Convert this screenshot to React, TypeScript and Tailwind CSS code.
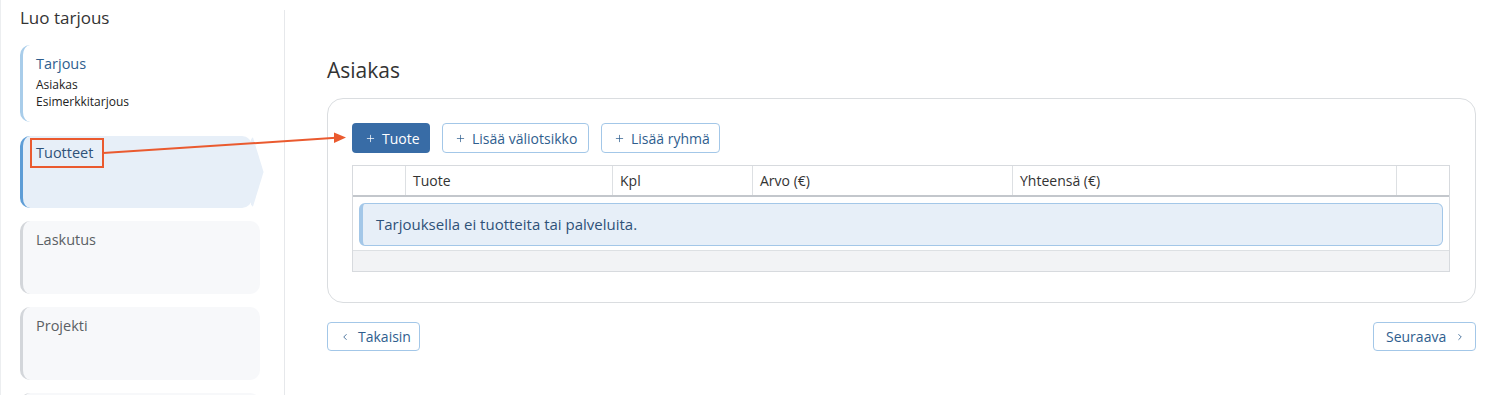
import { Plus, ChevronLeft, ChevronRight } from "lucide-react";

const columns = [
  { label: "", width: "w-[53px]" },
  { label: "Tuote", width: "w-[207px]" },
  { label: "Kpl", width: "w-[140px]" },
  { label: "Arvo (€)", width: "w-[260px]" },
  { label: "Yhteensä (€)", width: "w-[384px]" },
  { label: "", width: "flex-1" },
];

const StepCard = ({ title }: { title: string }) => (
  <div className="mt-[13px] h-[73px] w-[240px] shrink-0 rounded-[10px] border-l-[3px] border-[#d3d6da] bg-[#f7f8fa] pl-[13px] pt-[9px]">
    <div className="text-[14.5px] leading-[20px] text-[#5b5f64]">{title}</div>
  </div>
);

const OutlineButton = ({ children, className = "" }: { children: React.ReactNode; className?: string }) => (
  <button
    className={`flex h-[30px] shrink-0 items-center gap-[6px] whitespace-nowrap rounded-[4px] border border-[#a3c7e8] bg-white pl-[12px] text-[14px] text-[#2f5e8e] ${className}`}
  >
    {children}
  </button>
);

export default function App() {
  return (
    <div className="relative flex h-[395px] w-[1497px] overflow-hidden border-l border-[#eceef0] bg-white font-['Open_Sans',sans-serif]">
      {/* sidebar */}
      <aside className="mt-[10px] flex w-[284px] shrink-0 flex-col border-r border-[#e6e8eb] px-[19px]">
        <h1 className="-mt-[4px] shrink-0 text-[17px] leading-[24px] text-[#333]">Luo tarjous</h1>

        <div className="mt-[15px] h-[77px] w-[240px] shrink-0 rounded-[10px] border-l-[3px] border-[#a9cdea] bg-white pl-[13px] pt-[9px]">
          <div className="text-[14.5px] leading-[20px] text-[#2f5e8e]">Tarjous</div>
          <div className="mt-[2px] text-[12px] leading-[17px] text-[#222]">Asiakas</div>
          <div className="text-[12px] leading-[17px] text-[#222]">Esimerkkitarjous</div>
        </div>

        <div className="mt-[14px] flex h-[72px] shrink-0">
          <div className="h-[72px] w-[240px] rounded-[10px] border-l-[3px] border-[#5e9dd6] bg-[#e7eff8] pl-[13px] pt-[7px]">
            <div className="text-[14.5px] leading-[20px] text-[#2f5278]">Tuotteet</div>
          </div>
          <svg width="14" height="72" viewBox="0 0 14 72" className="-ml-[1px]">
            <polygon points="0,2 2,0 13,36 2,72 0,70" fill="#e7eff8" />
          </svg>
        </div>

        <StepCard title="Laskutus" />
        <StepCard title="Projekti" />
        <StepCard title="" />
      </aside>

      {/* main */}
      <main className="flex flex-1 flex-col pl-[42px] pr-[21px] pt-[56px]">
        <h2 className="text-[21px] leading-[28px] text-[#333]">Asiakas</h2>

        <section className="mt-[14px] rounded-[16px] border border-[#dadde0] px-[24px] pb-[30px] pt-[24px]">
          <div className="flex gap-[12px]">
            <button className="flex h-[30px] w-[78px] shrink-0 items-center gap-[6px] whitespace-nowrap rounded-[4px] bg-[#386ca6] pl-[13px] text-[14px] text-white">
              <Plus size={11} strokeWidth={1.6} />
              Tuote
            </button>
            <OutlineButton className="w-[147px]">
              <Plus size={11} strokeWidth={1.6} />
              Lisää väliotsikko
            </OutlineButton>
            <OutlineButton className="w-[119px]">
              <Plus size={11} strokeWidth={1.6} />
              Lisää ryhmä
            </OutlineButton>
          </div>

          <div className="mt-[12px] w-[1098px] border border-[#d7dade]">
            <div className="flex h-[31px] border-b-2 border-[#c3c7cc]">
              {columns.map((c, i) => (
                <div
                  key={i}
                  className={`${c.width} flex items-center pl-[7px] text-[14px] text-[#333] ${
                    i < columns.length - 1 ? "border-r border-[#dde0e3]" : ""
                  }`}
                >
                  {c.label}
                </div>
              ))}
            </div>
            <div className="px-[6px] pb-[4px] pt-[6px]">
              <div className="flex h-[43px] items-center rounded-[6px] border border-l-[4px] border-[#a3c7e8] bg-[#e7eff8] pl-[13px] text-[15px] text-[#2f5278]">
                Tarjouksella ei tuotteita tai palveluita.
              </div>
            </div>
            <div className="h-[21px] border-t border-[#dde0e3] bg-[#f2f3f5]" />
          </div>
        </section>

        <div className="mt-[19px] flex justify-between">
          <button className="flex h-[29px] w-[93px] items-center gap-[8px] whitespace-nowrap rounded-[4px] border border-[#a3c7e8] pl-[12px] text-[14px] text-[#2f5e8e]">
            <ChevronLeft size={10} strokeWidth={2} />
            Takaisin
          </button>
          <button className="flex h-[29px] w-[103px] items-center gap-[9px] whitespace-nowrap rounded-[4px] border border-[#a3c7e8] pl-[12px] text-[14px] text-[#2f5e8e]">
            Seuraava
            <ChevronRight size={10} strokeWidth={2} />
          </button>
        </div>
      </main>

      {/* annotation overlay */}
      <svg className="pointer-events-none absolute left-0 top-0" width="1497" height="395">
        <rect x="30" y="139" width="72" height="28" fill="none" stroke="#ea5a2f" strokeWidth="2" />
        <line x1="102" y1="153" x2="335" y2="137.8" stroke="#ea5a2f" strokeWidth="2" />
        <polygon points="333,132.5 345,137.6 333,143" fill="#ea5a2f" />
      </svg>
    </div>
  );
}
